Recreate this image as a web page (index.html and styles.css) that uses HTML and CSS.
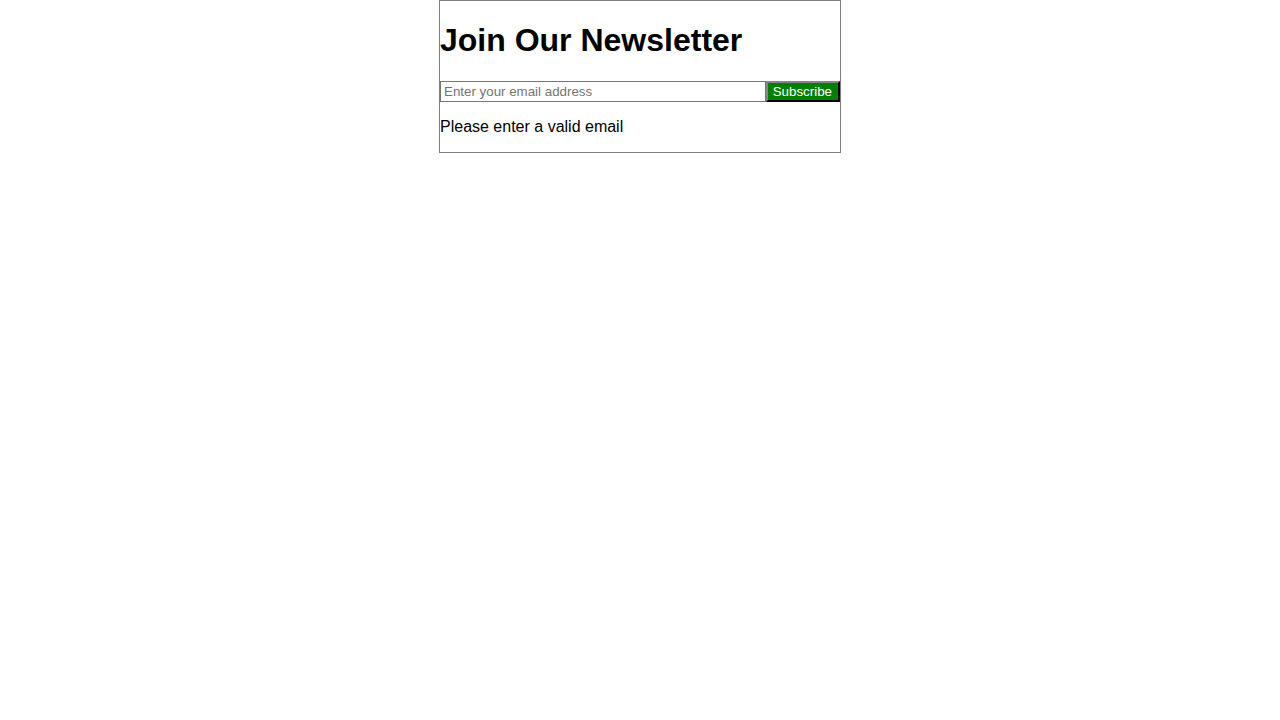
FILE: index.html
```html
<!DOCTYPE html>
<html lang="en">
<head>
<meta charset="utf-8">
<title>Newsletter</title>
<link rel="stylesheet" href="styles.css">
</head>
<body>
<div class="newsletter">
  <h1 class="title">Join Our Newsletter</h1>
  <form class="form" onsubmit="return false">
    <input class="email" type="email" placeholder="Enter your email address">
    <button class="subscribe" type="submit">Subscribe</button>
  </form>
  <p class="message">Please enter a valid email</p>
</div>
</body>
</html>
```

FILE: styles.css
```css
body {
  margin: 0;
  font-family: "Liberation Sans", Arial, sans-serif;
}
.newsletter {
  width: 400px;
  margin: 0 auto;
  border: 1px solid #808080;
}
.title {
  font-size: 32px;
  margin: 21.44px 0;
}
.form {
  display: flex;
  margin: 0;
}
.email {
  flex: 1;
  min-width: 0;
  font-family: "Liberation Sans", Arial, sans-serif;
  font-size: 13.333px;
  padding: 1px 3px;
  border: 1px solid #767676;
  height: 21px;
  box-sizing: border-box;
  margin: 0;
}
.subscribe {
  background: green;
  color: #fff;
  font-family: "Liberation Sans", Arial, sans-serif;
  font-size: 13.333px;
  padding: 1px 6px 1px 5px;
  border: 2px outset #333;
  height: 21px;
  box-sizing: border-box;
  margin: 0;
}
.message {
  font-size: 16px;
  margin: 16px 0;
}
```
